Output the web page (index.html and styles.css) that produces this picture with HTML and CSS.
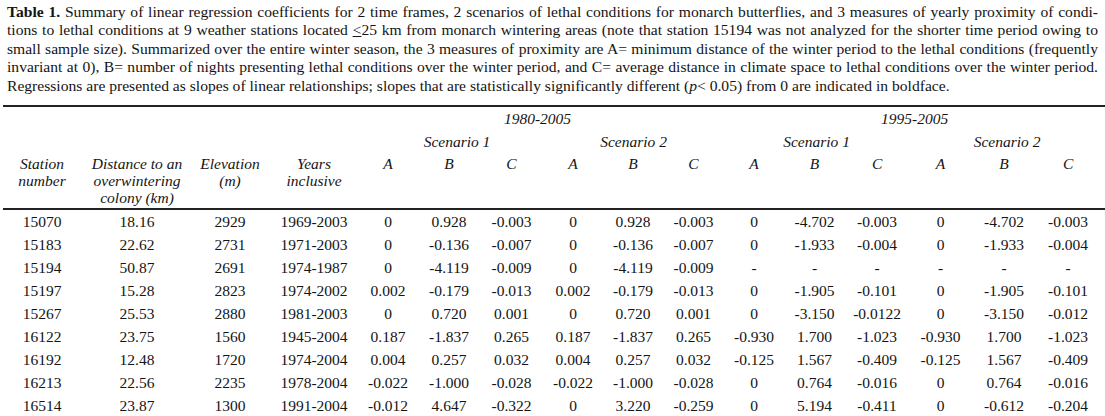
FILE: index.html
```html
<!DOCTYPE html>
<html lang="en">
<head>
<meta charset="utf-8">
<title>Table 1</title>
<link rel="stylesheet" href="styles.css">
</head>
<body>
<div class="caption">
  <span class="line"><b>Table 1.</b> Summary of linear regression coefficients for 2 time frames, 2 scenarios of lethal conditions for monarch butterflies, and 3 measures of yearly proximity of condi-</span>
  <span class="line">tions to lethal conditions at 9 weather stations located <span class="le">&lt;</span>25 km from monarch wintering areas (note that station 15194 was not analyzed for the shorter time period owing to</span>
  <span class="line">small sample size). Summarized over the entire winter season, the 3 measures of proximity are A= minimum distance of the winter period to the lethal conditions (frequently</span>
  <span class="line">invariant at 0), B= number of nights presenting lethal conditions over the winter period, and C= average distance in climate space to lethal conditions over the winter period.</span>
  <span class="line last">Regressions are presented as slopes of linear relationships; slopes that are statistically significantly different (<i>p</i>&lt; 0.05) from 0 are indicated in boldface.</span>
</div>
<table class="results">
  <colgroup>
    <col class="w87"><col class="w94"><col class="w88"><col class="w79">
    <col class="w67"><col class="w62"><col class="w63"><col class="w60">
    <col class="w60"><col class="w61"><col class="w60"><col class="w61">
    <col class="w64"><col class="w63"><col class="w64"><col class="w69">
  </colgroup>
  <thead>
    <tr class="hr1">
      <th colspan="4"></th>
      <th colspan="6" class="period p1">1980-2005</th>
      <th colspan="6" class="period p2">1995-2005</th>
    </tr>
    <tr class="hr2">
      <th colspan="4"></th>
      <th colspan="3" class="scen s11">Scenario 1</th>
      <th colspan="3" class="scen">Scenario 2</th>
      <th colspan="3" class="scen">Scenario 1</th>
      <th colspan="3" class="scen">Scenario 2</th>
    </tr>
    <tr class="hr3">
      <th>Station<br>number</th>
      <th>Distance to an<br>overwintering<br>colony (km)</th>
      <th>Elevation<br>(m)</th>
      <th>Years<br>inclusive</th>
      <th>A</th><th>B</th><th>C</th>
      <th>A</th><th>B</th><th>C</th>
      <th>A</th><th>B</th><th>C</th>
      <th>A</th><th>B</th><th>C</th>
    </tr>
  </thead>
  <tbody>
    <tr><td>15070</td><td>18.16</td><td>2929</td><td>1969-2003</td><td>0</td><td>0.928</td><td>-0.003</td><td>0</td><td>0.928</td><td>-0.003</td><td>0</td><td>-4.702</td><td>-0.003</td><td>0</td><td>-4.702</td><td>-0.003</td></tr>
    <tr><td>15183</td><td>22.62</td><td>2731</td><td>1971-2003</td><td>0</td><td>-0.136</td><td>-0.007</td><td>0</td><td>-0.136</td><td>-0.007</td><td>0</td><td>-1.933</td><td>-0.004</td><td>0</td><td>-1.933</td><td>-0.004</td></tr>
    <tr><td>15194</td><td>50.87</td><td>2691</td><td>1974-1987</td><td>0</td><td>-4.119</td><td>-0.009</td><td>0</td><td>-4.119</td><td>-0.009</td><td>-</td><td>-</td><td>-</td><td>-</td><td>-</td><td>-</td></tr>
    <tr><td>15197</td><td>15.28</td><td>2823</td><td>1974-2002</td><td>0.002</td><td>-0.179</td><td>-0.013</td><td>0.002</td><td>-0.179</td><td>-0.013</td><td>0</td><td>-1.905</td><td>-0.101</td><td>0</td><td>-1.905</td><td>-0.101</td></tr>
    <tr><td>15267</td><td>25.53</td><td>2880</td><td>1981-2003</td><td>0</td><td>0.720</td><td>0.001</td><td>0</td><td>0.720</td><td>0.001</td><td>0</td><td>-3.150</td><td>-0.0122</td><td>0</td><td>-3.150</td><td>-0.012</td></tr>
    <tr><td>16122</td><td>23.75</td><td>1560</td><td>1945-2004</td><td>0.187</td><td>-1.837</td><td>0.265</td><td>0.187</td><td>-1.837</td><td>0.265</td><td>-0.930</td><td>1.700</td><td>-1.023</td><td>-0.930</td><td>1.700</td><td>-1.023</td></tr>
    <tr><td>16192</td><td>12.48</td><td>1720</td><td>1974-2004</td><td>0.004</td><td>0.257</td><td>0.032</td><td>0.004</td><td>0.257</td><td>0.032</td><td>-0.125</td><td>1.567</td><td>-0.409</td><td>-0.125</td><td>1.567</td><td>-0.409</td></tr>
    <tr><td>16213</td><td>22.56</td><td>2235</td><td>1978-2004</td><td>-0.022</td><td>-1.000</td><td>-0.028</td><td>-0.022</td><td>-1.000</td><td>-0.028</td><td>0</td><td>0.764</td><td>-0.016</td><td>0</td><td>0.764</td><td>-0.016</td></tr>
    <tr><td>16514</td><td>23.87</td><td>1300</td><td>1991-2004</td><td>-0.012</td><td>4.647</td><td>-0.322</td><td>0</td><td>3.220</td><td>-0.259</td><td>0</td><td>5.194</td><td>-0.411</td><td>0</td><td>-0.612</td><td>-0.204</td></tr>
  </tbody>
</table>
</body>
</html>
```

FILE: styles.css
```css
html, body {
  margin: 0;
  padding: 0;
  background: #ffffff;
}

body {
  font-family: "Liberation Serif", "Times New Roman", serif;
  color: #141414;
  overflow: hidden;
}

.caption {
  margin: 3px 7px 10px 7px;
  font-size: 15.6px;
  line-height: 18.4px;
}

.caption .line {
  display: block;
  text-align: justify;
  text-align-last: justify;
}

.caption .line.last {
  text-align-last: left;
}

.caption b {
  font-weight: bold;
}

.caption .le {
  text-decoration: underline;
}

.results {
  margin-left: 3px;
  width: 1102px;
  table-layout: fixed;
  border-collapse: collapse;
  font-size: 15.5px;
  border-top: 2px solid #222;
}

.w87 { width: 87px; }
.w94 { width: 94px; }
.w88 { width: 88px; }
.w79 { width: 79px; }
.w67 { width: 67px; }
.w62 { width: 62px; }
.w63 { width: 63px; }
.w60 { width: 60px; }
.w61 { width: 61px; }
.w64 { width: 64px; }
.w69 { width: 69px; }

.results th {
  font-weight: normal;
  font-style: italic;
  text-align: center;
  line-height: 17px;
  padding: 0;
  white-space: nowrap;
}

.hr1 th {
  padding: 2.5px 0 3.5px 0;
}

.hr2 th {
  padding: 2.5px 0 2.5px 0;
}

.hr3 th {
  vertical-align: top;
  padding: 2.5px 0 2.5px 0;
}

.hr3 {
  border-bottom: 2px solid #222;
}

.scen.s11 {
  padding-left: 20px;
}

.results td {
  text-align: center;
  line-height: 23px;
  padding: 0;
  white-space: nowrap;
}

.results tr > :nth-child(1) { padding-right: 9px; }
.results .hr3 > :nth-child(3),
.results tbody td:nth-child(3) { padding-left: 4px; }
.results .hr3 > :nth-child(4),
.results tbody td:nth-child(4) { padding-left: 5px; }
.results .hr3 > :nth-child(5),
.results tbody td:nth-child(5) { padding-left: 7px; }
.results .hr3 > :nth-child(16),
.results tbody td:nth-child(16) { padding-right: 5px; }

.results .hr1 > :nth-child(1),
.results .hr2 > :nth-child(1) { padding-right: 0; }
```
